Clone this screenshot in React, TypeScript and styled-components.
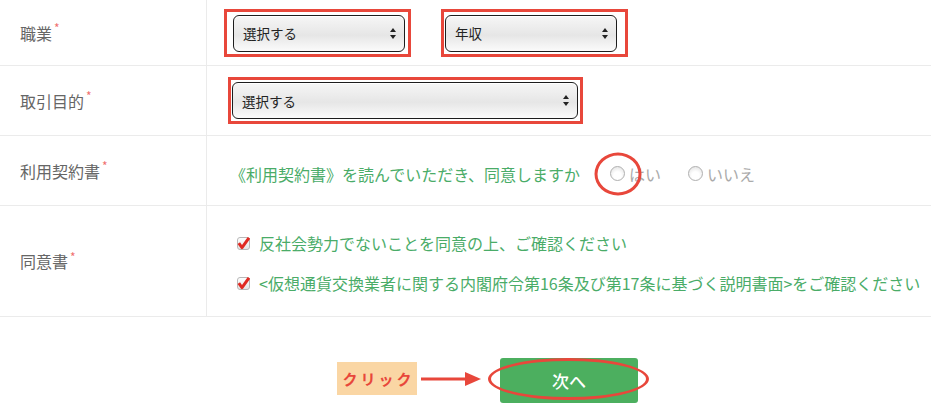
import React from "react"
import styled, { createGlobalStyle } from "styled-components"

const GREEN = "#4aac68"
const RED = "#e8473b"

const GlobalStyle = createGlobalStyle`
  body {
    margin: 0;
    background: #fff;
    font-family: "Noto Sans CJK JP", "Noto Sans", sans-serif;
  }
`

const Page = styled.div`
  width: 931px;
  height: 409px;
  overflow: hidden;
`

const Row = styled.div<{ $height: number }>`
  display: grid;
  grid-template-columns: 207px 1fr;
  height: ${({ $height }) => $height}px;
  border-bottom: 1px solid #ebebeb;
  box-sizing: border-box;
`

const Label = styled.div`
  display: flex;
  align-items: center;
  padding-left: 20px;
  border-right: 1px solid #ebebeb;
  font-size: 16px;
  color: #666;
`

const Required = styled.span`
  color: #f07070;
  font-size: 12px;
  position: relative;
  top: -5px;
  margin-left: 2px;
`

const Cell = styled.div<{ $pad?: string }>`
  display: flex;
  align-items: center;
  padding: ${({ $pad }) => $pad || "0 0 0 17px"};
  gap: 30px;
`

const Highlight = styled.div<{ $pad: string }>`
  border: 3px solid ${RED};
  padding: ${({ $pad }) => $pad};
  display: inline-flex;
`

const SelectBox = styled.div<{ $width: number }>`
  width: ${({ $width }) => $width}px;
  height: 37px;
  box-sizing: border-box;
  border: 1px solid #1d1d1d;
  border-radius: 6px;
  background: linear-gradient(#f6f6f6, #e6e6e6 55%, #fbfbfb);
  box-shadow: inset 0 1px 0 #fff;
  display: flex;
  align-items: center;
  justify-content: space-between;
  padding: 0 8px 0 9px;
  font-size: 13.5px;
  color: #222;
`

const Arrows = () => (
  <svg width="6" height="11" viewBox="0 0 6 11">
    <path d="M3 0 L6 4 L0 4 Z" fill="#222" />
    <path d="M3 11 L6 7 L0 7 Z" fill="#222" />
  </svg>
)

const Select = ({ text, width }: { text: string; width: number }) => (
  <SelectBox $width={width}>
    <span>{text}</span>
    <Arrows />
  </SelectBox>
)

const Question = styled.span`
  color: ${GREEN};
  font-size: 16px;
  margin-top: 6px;
`

const Radios = styled.div`
  display: flex;
  align-items: center;
  gap: 27px;
  margin-top: 6px;
`

const RadioOption = styled.label`
  display: flex;
  align-items: center;
  gap: 4px;
  font-size: 16px;
  color: #aaa;
`

const RadioDot = styled.span`
  position: relative;
  width: 15px;
  height: 15px;
  box-sizing: border-box;
  border-radius: 50%;
  border: 1.5px solid #b0b0b0;
  background: radial-gradient(circle at 50% 65%, #fff 35%, #dcdcdc 100%);
`

const Ring = styled.span`
  position: absolute;
  left: 50%;
  top: 50%;
  width: 47px;
  height: 43px;
  transform: translate(-50%, -50%);
  box-sizing: border-box;
  border: 3px solid ${RED};
  border-radius: 50%;
`

const CheckList = styled.div`
  display: flex;
  flex-direction: column;
  gap: 16px;
  margin-top: 4px;
`

const CheckItem = styled.div`
  display: flex;
  align-items: center;
  gap: 9px;
  font-size: 16px;
  color: ${GREEN};
  line-height: 24px;
  white-space: nowrap;
`

const Check = () => (
  <svg width="13" height="13" viewBox="0 0 13 13">
    <defs>
      <linearGradient id="cb" x1="0" y1="0" x2="0" y2="1">
        <stop offset="0" stopColor="#fff" />
        <stop offset="1" stopColor="#e4e4e4" />
      </linearGradient>
    </defs>
    <rect x="0.5" y="0.5" width="12" height="12" rx="2.5" fill="url(#cb)" stroke="#b8b8b8" />
    <path d="M1.8 6.2 L5 10.6 L12 0.8" fill="none" stroke="#e02a22" strokeWidth="3" strokeLinejoin="round" />
  </svg>
)

const Footer = styled.div`
  display: flex;
  align-items: center;
  padding: 41px 0 0 337px;
`

const ClickTag = styled.span`
  background: #fad6a4;
  color: ${RED};
  font-weight: 700;
  font-size: 15px;
  letter-spacing: 3px;
  width: 80px;
  height: 33px;
  margin-top: -4px;
  display: flex;
  align-items: center;
  justify-content: center;
  padding-left: 3px;
  box-sizing: border-box;
`

const Arrow = () => (
  <svg width="60" height="14" viewBox="0 0 60 14" style={{ margin: "-4px 19px 0 4px" }}>
    <path d="M0 7 H46" stroke={RED} strokeWidth="3" />
    <path d="M44 0 L60 7 L44 14 Z" fill={RED} />
  </svg>
)

const ButtonWrap = styled.div`
  position: relative;
`

const NextButton = styled.button`
  display: block;
  width: 138px;
  height: 45px;
  border: none;
  border-radius: 3px;
  background: #4caf5f;
  color: #fff;
  font-family: inherit;
  font-size: 17px;
  font-weight: 500;
`

const ButtonRing = styled.span`
  position: absolute;
  left: -12px;
  top: 0;
  width: 161px;
  height: 42px;
  box-sizing: border-box;
  border: 3px solid ${RED};
  border-radius: 50%;
  pointer-events: none;
`

const App = () => (
  <Page>
    <GlobalStyle />
    <Row $height={66}>
      <Label>
        職業<Required>*</Required>
      </Label>
      <Cell>
        <Highlight $pad="3px 3px 2px 6px">
          <Select text="選択する" width={172} />
        </Highlight>
        <Highlight $pad="3px 8px 2px 1px">
          <Select text="年収" width={172} />
        </Highlight>
      </Cell>
    </Row>
    <Row $height={70}>
      <Label>
        取引目的<Required>*</Required>
      </Label>
      <Cell $pad="0 0 0 21px">
        <Highlight $pad="2px 2px 2px 1px">
          <Select text="選択する" width={346} />
        </Highlight>
      </Cell>
    </Row>
    <Row $height={70}>
      <Label>
        利用契約書<Required>*</Required>
      </Label>
      <Cell $pad="0 0 0 23px">
        <Question>《利用契約書》を読んでいただき、同意しますか</Question>
        <Radios>
          <RadioOption>
            <RadioDot>
              <Ring />
            </RadioDot>
            はい
          </RadioOption>
          <RadioOption>
            <RadioDot />
            いいえ
          </RadioOption>
        </Radios>
      </Cell>
    </Row>
    <Row $height={111}>
      <Label>
        同意書<Required>*</Required>
      </Label>
      <Cell $pad="0 0 0 30px">
        <CheckList>
          <CheckItem>
            <Check />
            反社会勢力でないことを同意の上、ご確認ください
          </CheckItem>
          <CheckItem>
            <Check />
            &lt;仮想通貨交換業者に関する内閣府令第16条及び第17条に基づく説明書面&gt;をご確認ください
          </CheckItem>
        </CheckList>
      </Cell>
    </Row>
    <Footer>
      <ClickTag>クリック</ClickTag>
      <Arrow />
      <ButtonWrap>
        <NextButton>次へ</NextButton>
        <ButtonRing />
      </ButtonWrap>
    </Footer>
  </Page>
)

export default App
